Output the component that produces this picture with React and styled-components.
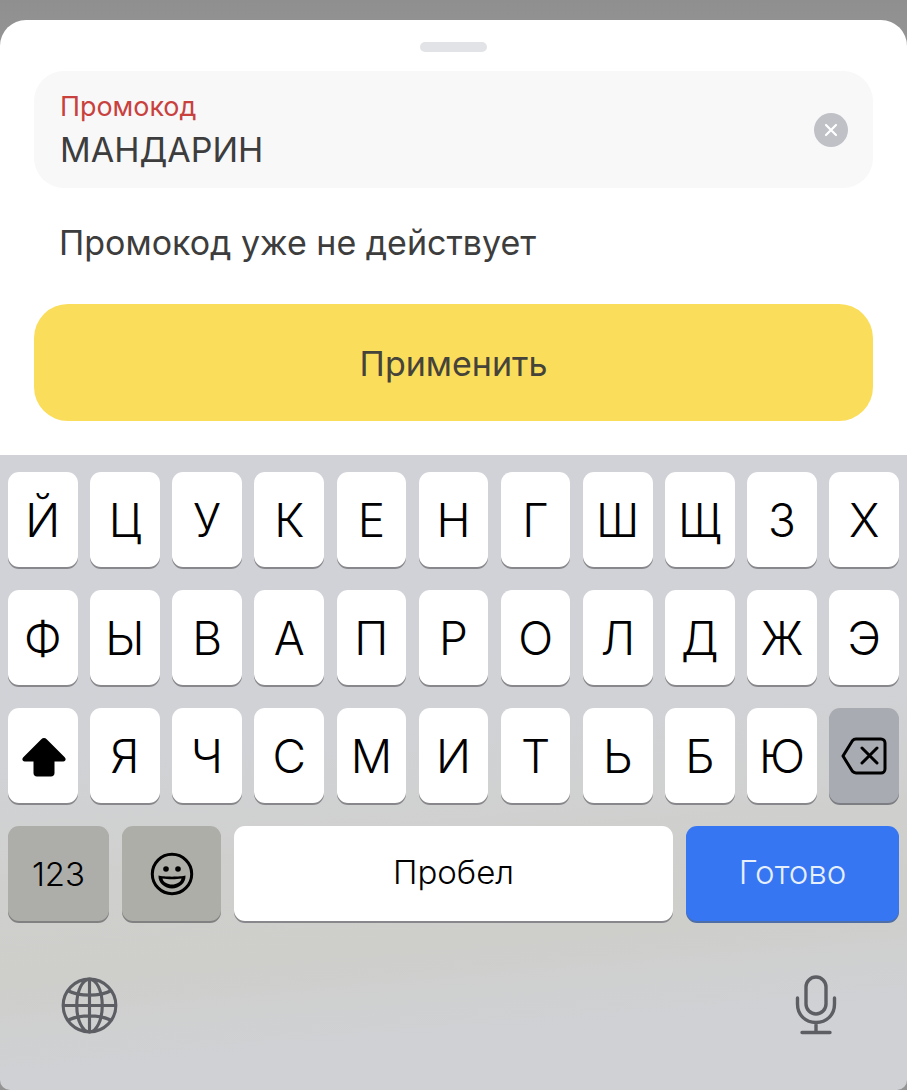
import React from 'react';
import styled, { createGlobalStyle } from 'styled-components';

const GlobalStyle = createGlobalStyle`
  html, body {
    margin: 0;
    padding: 0;
    background: #ffffff;
  }
  * {
    box-sizing: border-box;
  }
`;

const Screen = styled.div`
  width: 907px;
  height: 1090px;
  overflow: hidden;
  display: flex;
  flex-direction: column;
  padding-top: 20px;
  background: linear-gradient(180deg, #8f8f8f 0, #949494 40px);
  font-family: Inter, "Noto Sans", "Liberation Sans", sans-serif;
  color: #3c3c3c;
`;

const Sheet = styled.div`
  height: 435px;
  flex: none;
  display: flex;
  flex-direction: column;
  padding: 22px 34px 0;
  background: #ffffff;
  border-radius: 26px 26px 0 0;
`;

const Handle = styled.div`
  align-self: center;
  width: 67px;
  height: 10px;
  flex: none;
  border-radius: 5px;
  background: #e2e3e7;
`;

const Field = styled.div`
  height: 117px;
  flex: none;
  margin-top: 19px;
  display: flex;
  align-items: center;
  justify-content: space-between;
  padding: 0 25px 0 26px;
  border-radius: 30px;
  background: #f8f8f9;
`;

const FieldText = styled.div`
  display: flex;
  flex-direction: column;
  padding-top: 2px;
`;

const FieldLabel = styled.span`
  font-size: 26.9px;
  line-height: 29px;
  color: #c8413d;
`;

const FieldValue = styled.span`
  margin-top: 8px;
  font-size: 34px;
  line-height: 41px;
  color: #3d3d3d;
`;

const ClearButton = styled.div`
  width: 34px;
  height: 34px;
  margin-top: 1px;
  display: flex;
  align-items: center;
  justify-content: center;
  border-radius: 50%;
  background: #bfc1c7;
`;

const Message = styled.p`
  margin: 34px 0 0 25px;
  font-size: 34px;
  line-height: 41px;
  color: #3d3d3d;
`;

const ApplyButton = styled.div`
  height: 117px;
  flex: none;
  margin-top: 41px;
  padding-top: 1px;
  display: flex;
  align-items: center;
  justify-content: center;
  border-radius: 34px;
  background: #fadd5a;
  font-size: 34px;
  color: #45433a;
`;

const Keyboard = styled.div`
  flex: 1;
  display: flex;
  flex-direction: column;
  gap: 23px;
  padding: 17px 8px 0;
  border-radius: 0 0 10px 10px;
  background: linear-gradient(175deg, #d1d2d8 0, #d1d2d6 42%, #cfd0cd 62%, #cecfcb 74%, #d0d1d5 88%, #d0d1d5 100%);
`;

const KeyRow = styled.div`
  display: grid;
  grid-template-columns: repeat(11, 1fr);
  column-gap: 12.5px;
`;

const BottomRow = styled.div`
  display: grid;
  grid-template-columns: 101px 99px 439px 213px;
  column-gap: 13px;
`;

const Key = styled.div`
  height: 95px;
  display: flex;
  align-items: center;
  justify-content: center;
  border-radius: 11px;
  background: ${(p) => p.$bg || '#ffffff'};
  box-shadow: 0 2px 0 ${(p) => p.$edge || '#88888c'};
  color: ${(p) => p.$color || '#000000'};
  font-size: ${(p) => p.$size || 46}px;
  font-weight: 300;
`;

const WordKey = styled(Key)`
  padding-bottom: 3px;
`;

const SystemRow = styled.div`
  display: flex;
  justify-content: space-between;
  align-items: center;
  margin-top: 31px;
  padding: 0 62px 0 53px;
`;

const ShiftGlyph = styled.svg`
  margin: 2px 0 0 2px;
`;

const rows = [
  ['Й', 'Ц', 'У', 'К', 'Е', 'Н', 'Г', 'Ш', 'Щ', 'З', 'Х'],
  ['Ф', 'Ы', 'В', 'А', 'П', 'Р', 'О', 'Л', 'Д', 'Ж', 'Э'],
];
const thirdRow = ['Я', 'Ч', 'С', 'М', 'И', 'Т', 'Ь', 'Б', 'Ю'];

const ClearIcon = () => (
  <svg width="16" height="16" viewBox="0 0 16 16" fill="none" stroke="#ffffff" strokeWidth="2.2" strokeLinecap="round">
    <path d="M3 3l10 10M13 3L3 13" />
  </svg>
);

const ShiftIcon = () => (
  <ShiftGlyph width="46" height="40" viewBox="0 0 46 40" fill="#000000">
    <path d="M23 1c1 0 1.900.4 2.700 1.200l18 18c1.700 1.700 1 4.300-1.500 4.300H33.500v11.500c0 2-1.300 3.500-3.500 3.500H16c-2.200 0-3.500-1.500-3.500-3.500V24.500H3.800c-2.500 0-3.200-2.600-1.500-4.300l18-18C21.100 1.400 22 1 23 1z" />
  </ShiftGlyph>
);

const BackspaceIcon = () => (
  <svg width="46" height="38" viewBox="0 0 46 38" fill="none" stroke="#000000" strokeWidth="3" strokeLinejoin="round" strokeLinecap="round">
    <path d="M15 2h25a4 4 0 0 1 4 4v26a4 4 0 0 1-4 4H15a5 5 0 0 1-3.600-1.700L2 19 11.400 3.700A5 5 0 0 1 15 2z" />
    <path d="M21 11l15 15M36 11L21 26" />
  </svg>
);

const EmojiIcon = () => (
  <svg width="44" height="44" viewBox="0 0 44 44">
    <circle cx="22" cy="22" r="19.700" fill="none" stroke="#000000" strokeWidth="3" />
    <circle cx="16" cy="17" r="2.800" fill="#000000" />
    <circle cx="28" cy="17" r="2.800" fill="#000000" />
    <path d="M8.500 23.500C13 25 31 25 35.500 23.500 36 31 29 36.500 22 36.500S8 31 8.500 23.500z" fill="#000000" />
    <path d="M12.500 26.500c5 1 14 1 19 0-.5 3.500-5 6-9.500 6s-9-2.500-9.500-6z" fill="#b0b1aa" />
  </svg>
);

const GlobeIcon = () => (
  <svg width="57" height="57" viewBox="0 0 58 58" fill="none" stroke="#5c5e64" strokeWidth="3.200">
    <circle cx="29" cy="29" r="26.800" />
    <ellipse cx="29" cy="29" rx="13" ry="26.800" />
    <path d="M29 2v54M2 29h54M7 14c12 6 32 6 44 0M7 44c12-6 32-6 44 0" />
  </svg>
);

const MicIcon = () => (
  <svg width="42" height="60" viewBox="0 0 42 60" fill="none" stroke="#5c5e64" strokeWidth="3.400" strokeLinecap="round">
    <rect x="11" y="2" width="20" height="37" rx="10" />
    <path d="M2.500 23v6c0 11 8 18.500 18.500 18.500S39.500 40 39.500 29v-6M21 47.500V57M7 57.500h28" />
  </svg>
);

export default function App() {
  return (
    <Screen>
      <GlobalStyle />
      <Sheet>
        <Handle />
        <Field>
          <FieldText>
            <FieldLabel>Промокод</FieldLabel>
            <FieldValue>МАНДАРИН</FieldValue>
          </FieldText>
          <ClearButton>
            <ClearIcon />
          </ClearButton>
        </Field>
        <Message>Промокод уже не действует</Message>
        <ApplyButton>Применить</ApplyButton>
      </Sheet>
      <Keyboard>
        {rows.map((row) => (
          <KeyRow key={row[0]}>
            {row.map((letter) => (
              <Key key={letter}>{letter}</Key>
            ))}
          </KeyRow>
        ))}
        <KeyRow>
          <Key>
            <ShiftIcon />
          </Key>
          {thirdRow.map((letter) => (
            <Key key={letter}>{letter}</Key>
          ))}
          <Key $bg="#a9abb2" $edge="#7d7e83">
            <BackspaceIcon />
          </Key>
        </KeyRow>
        <BottomRow>
          <Key $bg="#adaeaa" $edge="#808180" $size={33}>123</Key>
          <Key $bg="#adaea8" $edge="#808180">
            <EmojiIcon />
          </Key>
          <WordKey $size={33}>Пробел</WordKey>
          <WordKey $bg="#3676f2" $edge="#4e6ea8" $color="#e6effc" $size={33}>Готово</WordKey>
        </BottomRow>
        <SystemRow>
          <GlobeIcon />
          <MicIcon />
        </SystemRow>
      </Keyboard>
    </Screen>
  );
}
